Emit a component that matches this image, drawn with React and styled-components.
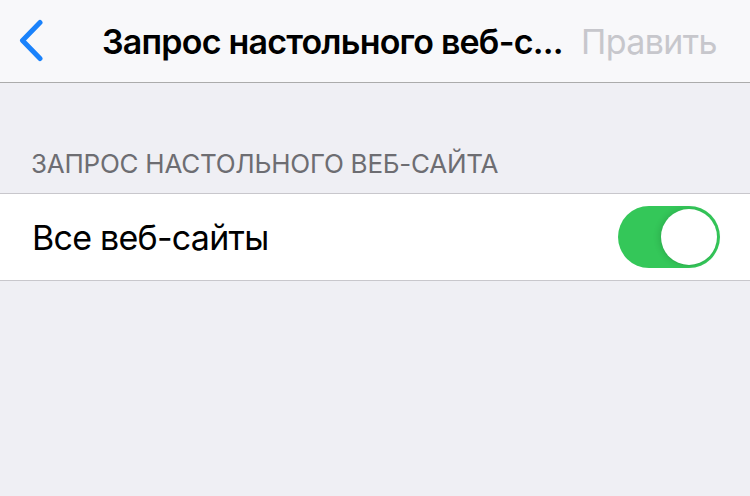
import styled, { createGlobalStyle } from 'styled-components';

const GlobalStyle = createGlobalStyle`
	html, body {
		margin: 0;
		padding: 0;
		background: #efeff4;
	}
	body {
		font-family: Inter, "Noto Sans", "Liberation Sans", sans-serif;
		-webkit-font-smoothing: antialiased;
	}
`;

const Screen = styled.div`
	width: 750px;
	height: 496px;
	background: #efeff4;
	overflow: hidden;
`;

const NavBar = styled.header`
	height: 83px;
	box-sizing: border-box;
	display: flex;
	align-items: center;
	padding: 0 33px 0 18px;
	background: #f8f8fa;
	border-bottom: 1px solid #ababab;
`;

const BackButton = styled.button`
	display: flex;
	align-items: center;
	padding: 0;
	margin: 0 0 2px 0;
	border: none;
	background: none;
	color: #1a82fb;
	cursor: pointer;
`;

const Title = styled.h1`
	margin: 0 0 0 58px;
	font-size: 34px;
	font-weight: 600;
	letter-spacing: -0.8px;
	color: #000;
	white-space: nowrap;
`;

const EditButton = styled.span`
	margin-left: auto;
	font-size: 34px;
	font-weight: 400;
	letter-spacing: -0.6px;
	color: #c7c7cc;
	white-space: nowrap;
`;

const SectionHeader = styled.div`
	padding: 67px 31px 16px;
	font-size: 26px;
	line-height: 27px;
	color: #6d6d72;
	letter-spacing: -0.25px;
`;

const Group = styled.div`
	background: #fff;
	border-top: 1px solid #c8c7cc;
	border-bottom: 1px solid #c8c7cc;
`;

const Row = styled.div`
	height: 86px;
	display: flex;
	align-items: center;
	justify-content: space-between;
	padding: 0 30px 0 32px;
`;

const RowLabel = styled.span`
	font-size: 34px;
	color: #000;
	letter-spacing: -0.75px;
`;

const Switch = styled.div`
	width: 102px;
	height: 62px;
	border-radius: 31px;
	background: ${(p) => (p.$on ? '#34c759' : '#e9e9eb')};
	display: flex;
	align-items: center;
	justify-content: ${(p) => (p.$on ? 'flex-end' : 'flex-start')};
	padding: 0 3px;
	box-sizing: border-box;
`;

const Knob = styled.div`
	width: 56px;
	height: 56px;
	border-radius: 50%;
	background: #fff;
	box-shadow: -2px 0 6px rgba(0, 0, 0, 0.12), 0 1px 1px rgba(0, 0, 0, 0.06);
`;

const Chevron = () => (
	<svg width="26" height="43" viewBox="0 0 26 43" fill="none">
		<path
			d="M22 3.5 L4.5 21.5 L22 39.5"
			stroke="currentColor"
			strokeWidth="5"
			strokeLinecap="round"
			strokeLinejoin="round"
		/>
	</svg>
);

const App = () => {
	return (
		<Screen>
			<GlobalStyle />
			<NavBar>
				<BackButton aria-label="Назад">
					<Chevron />
				</BackButton>
				<Title>Запрос настольного веб-с...</Title>
				<EditButton>Править</EditButton>
			</NavBar>
			<SectionHeader>ЗАПРОС НАСТОЛЬНОГО ВЕБ-САЙТА</SectionHeader>
			<Group>
				<Row>
					<RowLabel>Все веб-сайты</RowLabel>
					<Switch $on>
						<Knob />
					</Switch>
				</Row>
			</Group>
		</Screen>
	);
};

export default App;
